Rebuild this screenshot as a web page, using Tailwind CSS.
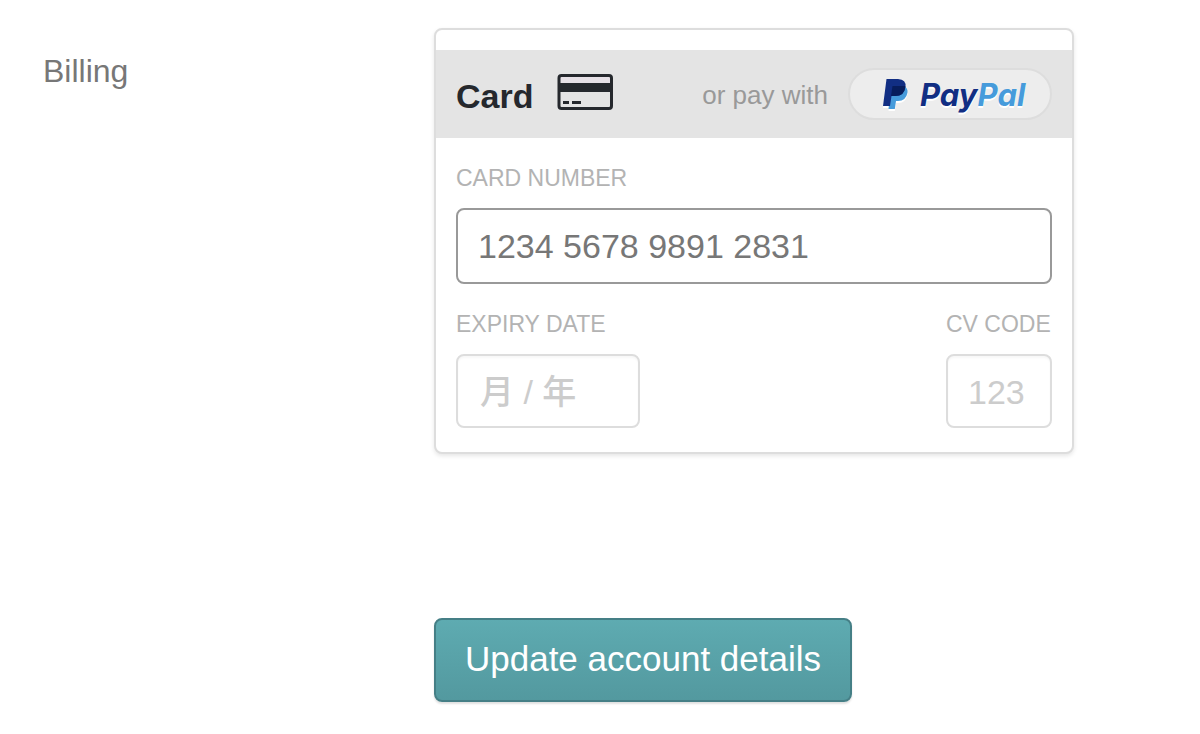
<!DOCTYPE html>
<html lang="en">
<head>
    <meta charset="UTF-8">
    <meta name="viewport" content="width=device-width, initial-scale=1.0">
    <title>Billing</title>
    <script src="https://cdn.jsdelivr.net/npm/@tailwindcss/browser@4"></script>
</head>
<body class="bg-white font-['Liberation_Sans','Noto_Sans_CJK_JP',sans-serif] text-[#777]">

    <form class="pl-[43px] pr-8 pt-7 pb-8" onsubmit="return false;">
        <div class="flex items-start">
            <h2 class="w-[391px] shrink-0 pt-[23px] text-[32px] leading-10">Billing</h2>

            <section class="w-full max-w-[640px] pt-5 bg-white border-2 border-[#ddd] rounded-lg shadow-[0_2px_4px_rgba(0,0,0,0.1)]">
                <header class="flex items-center h-[88px] px-5 bg-[#e4e4e4]">
                    <h3 class="pt-1 text-[34px] leading-10 font-bold text-[#25282d]">Card</h3>
                    <svg class="ml-6 mb-1 w-14 h-9" viewBox="0 0 56 36" fill="none" aria-hidden="true">
                        <path fill="#e6e0e6" d="M3 3h50v6H3z"/>
                        <rect x="2" y="1.5" width="52.5" height="33" rx="2.5" stroke="#25282d" stroke-width="3"/>
                        <path fill="#25282d" d="M2 9h52v9H2zM6 27h6v3H6zM15 27h9v3h-9z"/>
                    </svg>

                    <span class="ml-auto pt-0.5 text-[26px] leading-8 text-[#999]">or pay with</span>
                    <button type="button" aria-label="PayPal" class="flex items-center ml-5 w-[204px] h-[52px] pl-8 bg-[#ededed] border-2 border-[#ddd] rounded-full">
                        <svg class="w-[26px] h-8 drop-shadow-[0_2px_0_#fff]" viewBox="0 0 26 32" aria-hidden="true">
                            <path fill="#469bdb" d="M9 8h13q4 2 3.5 6.5Q24 23 16 23h-2l-1.2 8H6.5z"/>
                            <path fill="#112e83" d="M4.5 1H16q8.5 .5 7.5 8Q22 18 13 18H9.5L8 28H1z"/>
                            <path fill="#071d5c" d="M10.5 8h12.9Q23 18 13 18H9z"/>
                        </svg>
                        <span class="ml-3 pt-0.5 font-['Inter',sans-serif] text-[31px] leading-10 font-bold italic text-[#112e83] [text-shadow:0_2px_0_#fff]">Pay<span class="text-[#469bdb]">Pal</span></span>
                    </button>
                </header>

                <div class="px-5 pt-6 pb-6">
                    <label for="card-number" class="block text-[23px] leading-8 text-[#b3b3b3]">CARD NUMBER</label>
                    <input id="card-number" type="text" inputmode="numeric" value="1234 5678 9891 2831" class="block mt-3.5 w-full h-[76px] px-5 text-[34px] text-[#777] bg-white border-2 border-[#999] rounded-lg">

                    <div class="flex justify-between mt-6">
                        <div>
                            <label for="expiry" class="block text-[23px] leading-8 text-[#b3b3b3]">EXPIRY DATE</label>
                            <input id="expiry" type="text" placeholder="月 / 年" class="block mt-3.5 w-[184px] h-[74px] pt-0.5 px-[22px] text-[34px] font-medium placeholder:text-[#ccc] bg-white border-2 border-[#ddd] rounded-lg shadow-[inset_0_2px_2px_rgba(0,0,0,0.03)]">
                        </div>
                        <div>
                            <label for="cvc" class="block text-[23px] leading-8 text-[#b3b3b3]">CV CODE</label>
                            <input id="cvc" type="text" placeholder="123" class="block mt-3.5 w-[106px] h-[74px] pt-0.5 px-5 text-[34px] font-medium placeholder:text-[#ccc] bg-white border-2 border-[#ddd] rounded-lg shadow-[inset_0_2px_2px_rgba(0,0,0,0.03)]">
                        </div>
                    </div>
                </div>
            </section>
        </div>

        <button type="submit" class="block mt-[164px] ml-[391px] w-[418px] h-[84px] pb-0.5 text-[35px] leading-10 text-white bg-linear-to-b from-[#5eabb1] to-[#53999f] border-2 border-[#457f86] rounded-lg shadow-[0_2px_2px_rgba(0,0,0,0.12)]">
            Update account details
        </button>
    </form>

</body>
</html>
